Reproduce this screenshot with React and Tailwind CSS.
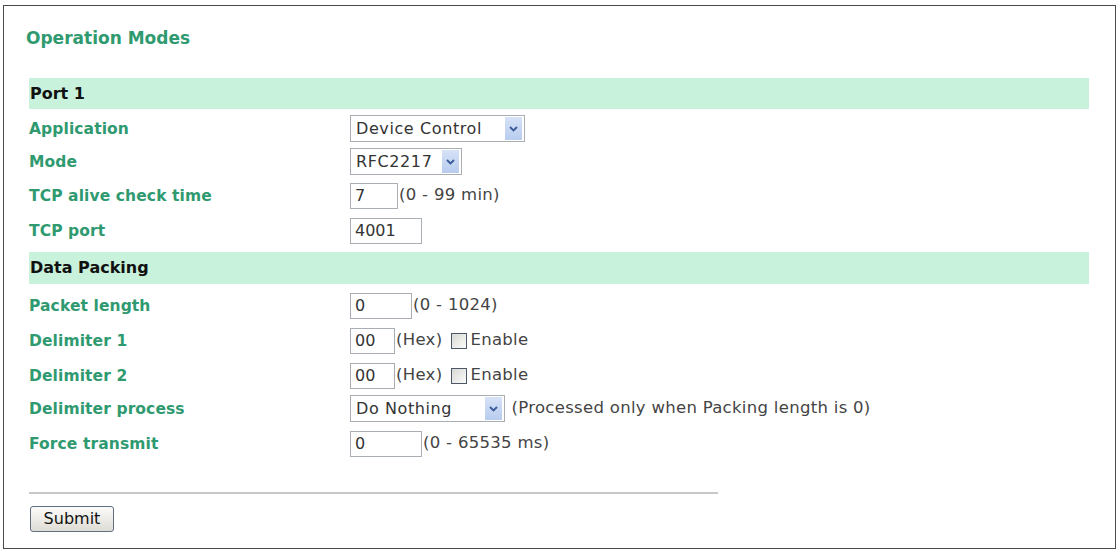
import React from 'react';

const font = { fontFamily: '"DejaVu Sans", Verdana, sans-serif' };

const Chevron = () => (
  <svg width="9" height="6" viewBox="0 0 9 6">
    <path d="M1 1 L4.5 4.5 L8 1" fill="none" stroke="#3a5a9a" strokeWidth="1.8" />
  </svg>
);

const Select = ({ value, width }) => (
  <div className={`flex items-center h-[27px] border border-[#a8aeb4] bg-white ${width}`}>
    <span className="flex-1 pl-[5px] text-[16px] tracking-[0.6px] text-[#333] whitespace-nowrap overflow-hidden">{value}</span>
    <span className="flex items-center justify-center w-[17px] h-[23px] mr-[2px] bg-gradient-to-b from-[#d6e2f6] to-[#b8ccef]">
      <Chevron />
    </span>
  </div>
);

const Input = ({ value, width }) => (
  <div className={`flex items-center h-[26px] border border-[#a8aeb4] bg-white pl-[4px] text-[16px] text-[#333] ${width}`}>
    {value}
  </div>
);

const Check = () => (
  <span className="inline-block w-[16px] h-[16px] border border-[#4c5866] bg-gradient-to-br from-[#d8d8d4] to-[#fbfbfa]" />
);

const Hint = ({ children }) => (
  <span className="text-[16.5px] tracking-[0.3px] text-[#444] whitespace-nowrap">{children}</span>
);

const Band = ({ title, h }) => (
  <div className={`flex items-center bg-[#c8f2dc] pl-[1px] ${h}`}>
    <span className="text-[16px] font-bold text-[#111]">{title}</span>
  </div>
);

const Row = ({ label, h, pt, children }) => (
  <div className={`flex items-start ${h} ${pt}`}>
    <div className="flex items-center w-[321px] h-[27px] mt-[1px] text-[15.5px] font-bold tracking-[0.1px] text-[#2f9a70] whitespace-nowrap">{label}</div>
    <div className="flex items-center h-[27px] gap-[1px]">{children}</div>
  </div>
);

const Enable = () => (
  <span className="ml-[8px] flex items-center gap-[3px]">
    <Check />
    <Hint>Enable</Hint>
  </span>
);

export default function App() {
  return (
    <div className="bg-white w-[1117px] h-[551px] pl-[3px] pt-[5px]" style={font}>
      <div className="w-[1113px] h-[544px] border border-[#4a4a4a] bg-white pl-[25px] pr-[26px]">
        <div className="h-[72px] pt-[21px]">
          <h1 className="text-[17px] font-bold text-[#2f9a70] leading-[22px] -ml-[3px]">Operation Modes</h1>
        </div>

        <Band title="Port 1" h="h-[31px]" />
        <Row label="Application" h="h-[34px]" pt="pt-[6px]">
          <Select value="Device Control" width="w-[175px]" />
        </Row>
        <Row label="Mode" h="h-[34px]" pt="pt-[5px]">
          <Select value="RFC2217" width="w-[112px]" />
        </Row>
        <Row label="TCP alive check time" h="h-[35px]" pt="pt-[5px]">
          <Input value="7" width="w-[48px]" />
          <Hint>(0 - 99 min)</Hint>
        </Row>
        <Row label="TCP port" h="h-[40px]" pt="pt-[5px]">
          <Input value="4001" width="w-[72px]" />
        </Row>

        <Band title="Data Packing" h="h-[32px]" />
        <Row label="Packet length" h="h-[38px]" pt="pt-[8px]">
          <Input value="0" width="w-[62px]" />
          <Hint>(0 - 1024)</Hint>
        </Row>
        <Row label="Delimiter 1" h="h-[35px]" pt="pt-[5px]">
          <Input value="00" width="w-[45px]" />
          <Hint>(Hex)</Hint>
          <Enable />
        </Row>
        <Row label="Delimiter 2" h="h-[33px]" pt="pt-[5px]">
          <Input value="00" width="w-[45px]" />
          <Hint>(Hex)</Hint>
          <Enable />
        </Row>
        <Row label="Delimiter process" h="h-[35px]" pt="pt-[5px]">
          <Select value="Do Nothing" width="w-[155px]" />
          <Hint>&nbsp;(Processed only when Packing length is 0)</Hint>
        </Row>
        <Row label="Force transmit" h="h-[35px]" pt="pt-[5px]">
          <Input value="0" width="w-[72px]" />
          <Hint>(0 - 65535 ms)</Hint>
        </Row>

        <div className="pt-[32px]">
          <div className="w-[689px] h-[2px] bg-[#c8c8c8]" />
        </div>
        <div className="pt-[12px] pl-[1px]">
          <button className="w-[84px] h-[26px] rounded-[3px] border border-[#5f6f86] bg-gradient-to-b from-[#fbfbf9] to-[#dedcd4] text-[16px] text-[#111] leading-none">
            Submit
          </button>
        </div>
      </div>
    </div>
  );
}
